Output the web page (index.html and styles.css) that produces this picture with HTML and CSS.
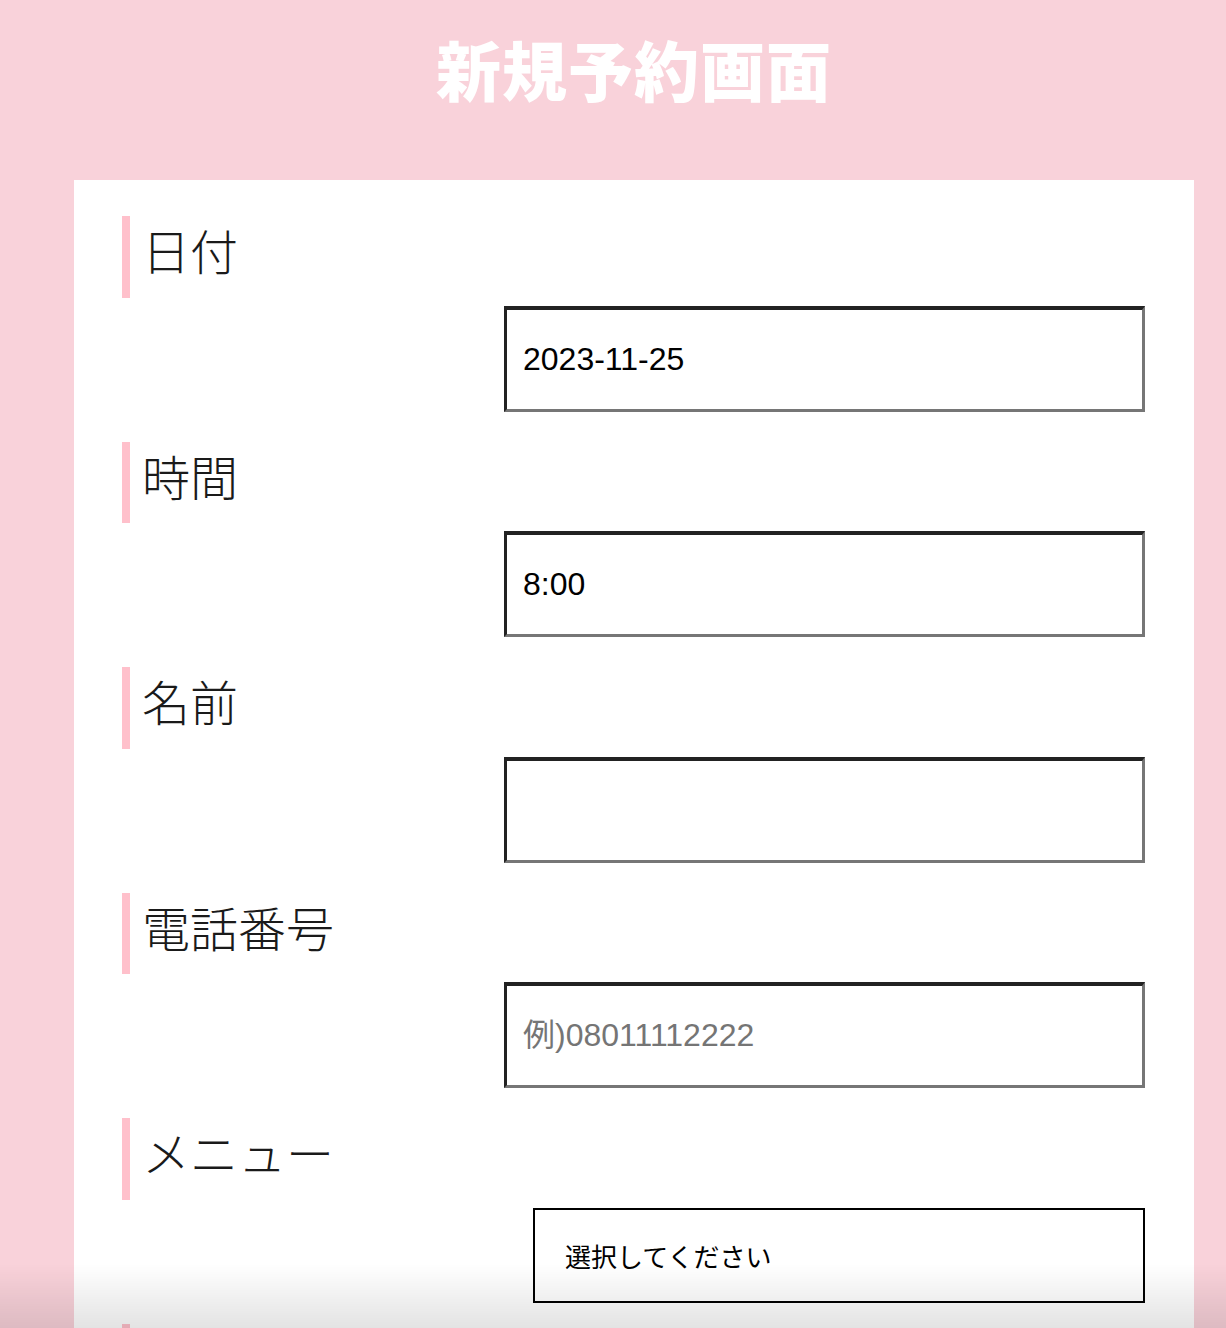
FILE: index.html
```html
<!DOCTYPE html>
<html lang="ja">
<head>
<meta charset="utf-8">
<title>新規予約画面</title>
<link rel="stylesheet" href="styles.css">
</head>
<body>
<div class="page">
  <header class="header">
    <h1 class="title">新規予約画面</h1>
  </header>
  <form class="card">
    <div class="row">
      <div class="label">日付</div>
      <div class="field"><input class="input" type="text" value="2023-11-25"></div>
    </div>
    <div class="row">
      <div class="label">時間</div>
      <div class="field"><input class="input" type="text" value="8:00"></div>
    </div>
    <div class="row">
      <div class="label">名前</div>
      <div class="field"><input class="input" type="text" value=""></div>
    </div>
    <div class="row">
      <div class="label">電話番号</div>
      <div class="field"><input class="input" type="text" placeholder="例)08011112222"></div>
    </div>
    <div class="row row-select">
      <div class="label">メニュー</div>
      <div class="field"><select class="select"><option>選択してください</option></select></div>
    </div>
    <div class="row">
      <div class="label">備考</div>
      <div class="field"><input class="input" type="text" value=""></div>
    </div>
  </form>
</div>
<div class="bottom-fade"></div>
</body>
</html>
```
FILE: styles.css
```css
html, body {
  margin: 0;
  padding: 0;
  background: #f9d2da;
}
body {
  font-family: "Noto Sans CJK JP", sans-serif;
  color: #222;
}
.page {
  margin-left: 74px;
  width: 1120px;
}
.header {
  height: 180px;
  box-sizing: border-box;
  padding-top: 29px;
}
.title {
  margin: 0;
  text-align: center;
  color: #fff;
  font-family: "Noto Sans CJK JP", sans-serif;
  font-weight: 900;
  font-size: 65px;
  line-height: 78px;
  letter-spacing: 1px;
}
.card {
  background: #fff;
  padding: 36px 49px 40px 48px;
  margin: 0;
}
.row {
  display: flex;
  flex-direction: column;
  padding-bottom: 30px;
}
.row-select {
  padding-bottom: 21px;
}
.label {
  border-left: 8px solid #ffc0cb;
  padding-left: 12px;
  padding-bottom: 14px;
  font-size: 48px;
  line-height: 67.6px;
  font-weight: 200;
  color: #1a1a1a;
}
.field {
  display: flex;
  justify-content: flex-end;
  margin-top: 8px;
}
.input {
  box-sizing: border-box;
  width: 641px;
  height: 106px;
  border-style: solid;
  border-width: 4px 3px 3px 3px;
  border-top-color: #222;
  border-left-color: #222;
  border-right-color: #767676;
  border-bottom-color: #767676;
  padding: 0 16px;
  font-family: "Liberation Sans", "Noto Sans CJK JP", sans-serif;
  font-size: 32px;
  color: #000;
  background: #fff;
  outline: none;
}
.input::placeholder {
  color: #757575;
}
.select {
  appearance: none;
  -webkit-appearance: none;
  box-sizing: border-box;
  width: 612px;
  height: 95px;
  border: 2px solid #000;
  border-radius: 0;
  background: #fff;
  padding: 0 30px;
  font-family: "Noto Sans CJK JP", sans-serif;
  font-size: 26px;
  color: #000;
  outline: none;
}
.bottom-fade {
  position: fixed;
  left: 0;
  right: 0;
  bottom: 0;
  height: 64px;
  pointer-events: none;
  background: linear-gradient(to bottom, rgba(0,0,0,0), rgba(0,0,0,0.11));
}
```
